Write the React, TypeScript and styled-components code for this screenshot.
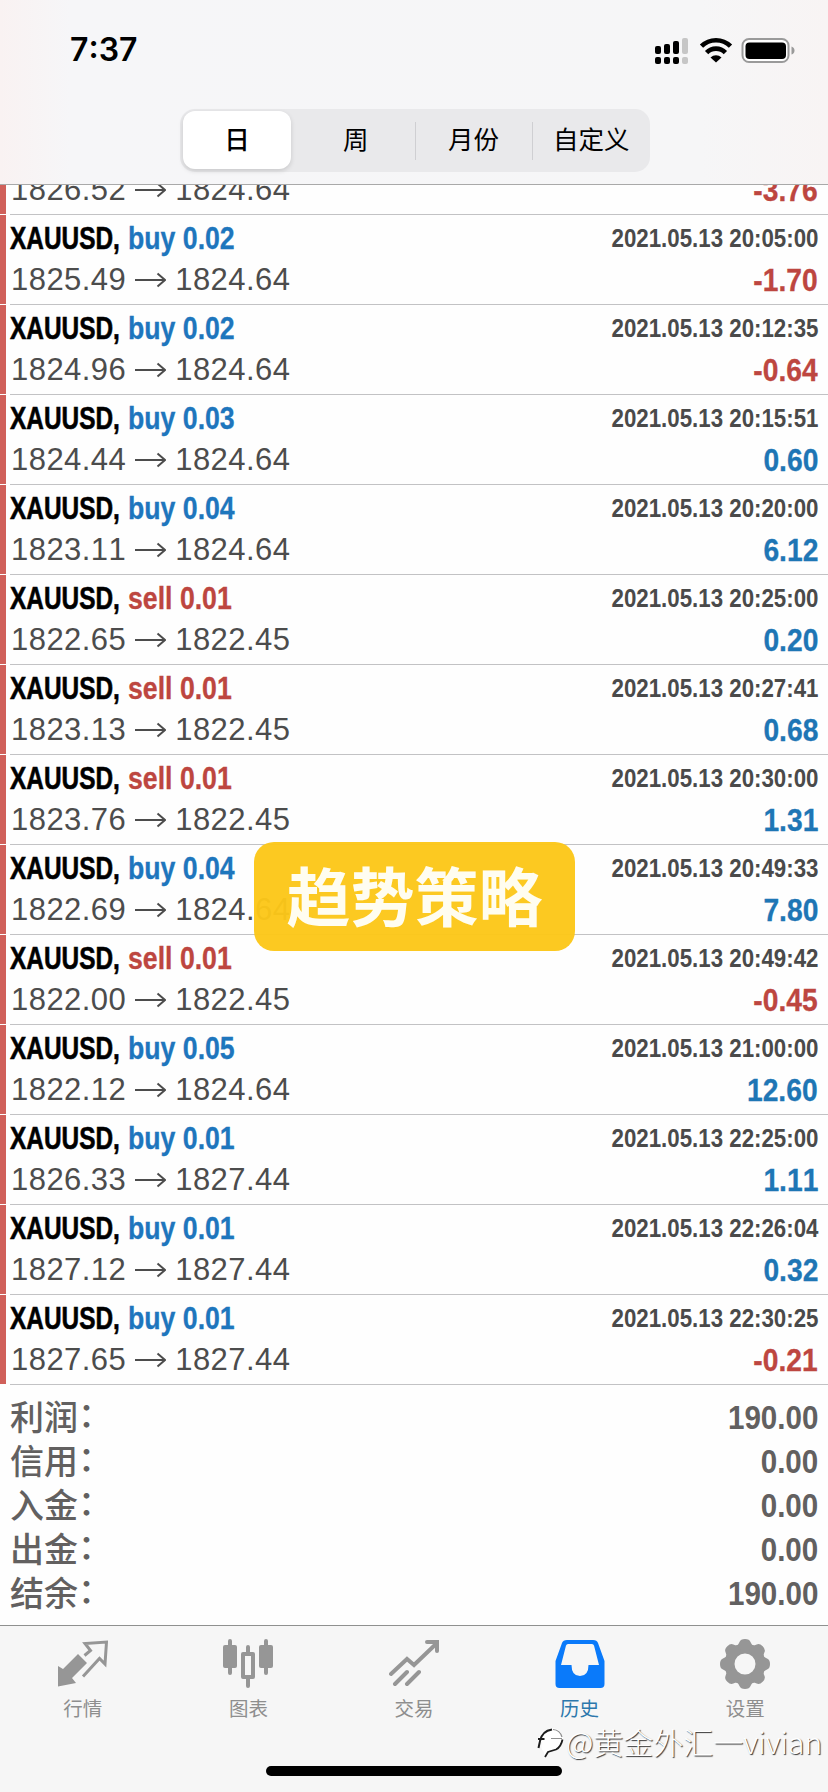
import React from "react";
import styled, { createGlobalStyle } from "styled-components";

const sans = `"Liberation Sans", Arial, sans-serif`;
const cjk = `"Noto Sans CJK SC", sans-serif`;

const GlobalStyle = createGlobalStyle`
  * { box-sizing: border-box; font-kerning: none !important; }
  html, body { margin: 0; padding: 0; background: #fefefe; }
  body { width: 828px; height: 1792px; overflow: hidden; font-family: ${sans}; }
`;

const Screen = styled.div`
  position: relative;
  display: flex;
  flex-direction: column;
  width: 828px;
  height: 1792px;
  overflow: hidden;
  background: #fefefe;
`;

const Header = styled.header`
  flex: none;
  height: 185px;
  border-bottom: 1px solid #a9a9a9;
  background: linear-gradient(90deg, #f9f2f2 0, #f6f6f8 70px, #f6f6f7 700px, #f8f4f4 100%);
`;

const StatusBar = styled.div`
  display: flex;
  align-items: center;
  justify-content: space-between;
  height: 109px;
  padding: 0 32px 10px 70px;
`;

const Time = styled.span`
  font: 600 32px/40px Inter, sans-serif;
  color: #000;
`;

const StatusIcons = styled.svg`
  display: block;
`;

const Segmented = styled.div`
  display: flex;
  width: 470px;
  height: 63px;
  margin-left: 180px;
  border-radius: 15px;
  background: #e9e9eb;
`;

const Segment = styled.div<{ $active?: boolean; $divided?: boolean }>`
  display: flex;
  justify-content: center;
  flex: ${(p) => (p.$active ? "0 0 108px" : "1 1 0")};
  margin: ${(p) => (p.$active ? "2px 6px 3px 3px" : "0")};
  padding-top: ${(p) => (p.$active ? "9px" : "11px")};
  border-radius: ${(p) => (p.$active ? "12px" : "0")};
  background: ${(p) =>
    p.$active
      ? "#fff"
      : p.$divided
        ? "linear-gradient(#cfcfd2, #cfcfd2) left center / 1px 38px no-repeat"
        : "none"};
  box-shadow: ${(p) => (p.$active ? "0 2px 5px rgba(0, 0, 0, 0.14)" : "none")};
  font: ${(p) => (p.$active ? 500 : 400)} 25.5px/36px ${cjk};
  color: #000;
`;

const DealList = styled.div`
  display: flex;
  flex-direction: column;
  justify-content: flex-end;
  flex: none;
  height: 1200px;
  overflow: hidden;
`;

const DealRow = styled.div`
  display: flex;
  flex: none;
  height: 90px;
`;

const Strip = styled.div`
  width: 6px;
  height: 89px;
  background: #d0605a;
`;

const DealBody = styled.div`
  display: flex;
  justify-content: space-between;
  flex: 1;
  margin-left: 4px;
  padding: 4px 10px 0 0;
  border-bottom: 1px solid #c2c2c4;
`;

const Column = styled.div<{ $end?: boolean }>`
  display: flex;
  flex-direction: column;
  align-items: ${(p) => (p.$end ? "flex-end" : "flex-start")};
`;

const Title = styled.div`
  display: flex;
  height: 41px;
  font: 700 31px/40px ${sans};
  white-space: pre;
`;

const SymbolName = styled.span`
  width: 118px;
  color: #000;
  transform: scaleX(0.787);
  transform-origin: left;
  -webkit-text-stroke: 0.6px currentColor;
`;

const Volume = styled.span<{ $sell: boolean }>`
  color: ${(p) => (p.$sell ? "#bd4640" : "#1e76bd")};
  transform: scaleX(0.86);
  transform-origin: left;
  -webkit-text-stroke: 0.3px currentColor;
`;

const Prices = styled.div`
  display: flex;
  align-items: center;
  gap: 9px;
  height: 40px;
  padding-left: 1px;
  font: 400 31px/40px ${sans};
  letter-spacing: 0.45px;
  color: #4c4c4c;
`;

const Moment = styled.div`
  height: 41px;
  font: 700 26px/38px ${sans};
  color: #4a4a4a;
  transform: scaleX(0.857);
  transform-origin: right;
`;

const Profit = styled.div<{ $loss: boolean }>`
  height: 40px;
  font: 700 31px/42px ${sans};
  color: ${(p) => (p.$loss ? "#bd4640" : "#1e76b5")};
  transform: scaleX(0.91);
  transform-origin: right;
  -webkit-text-stroke: 0.3px currentColor;
`;

const Summary = styled.section`
  flex: none;
  height: 240px;
  padding: 10px 10px 0 10px;
`;

const SummaryRow = styled.div`
  display: flex;
  justify-content: space-between;
  height: 44px;
  color: #626060;
`;

const SummaryLabel = styled.span`
  display: flex;
  margin-top: -1px;
  font: 500 34px/44px ${cjk};
`;

const Colon = styled.span`
  margin-top: -3px;
`;

const SummaryValue = styled.span`
  font: 700 32.5px/46px ${sans};
  transform: scaleX(0.91);
  transform-origin: right;
`;

const TabBar = styled.nav`
  display: flex;
  flex: none;
  height: 167px;
  padding-top: 13px;
  border-top: 1px solid #8f908f;
  background: #f6f6f6;
`;

const Tab = styled.div<{ $active?: boolean }>`
  display: flex;
  flex-direction: column;
  align-items: center;
  flex: 1;
  gap: 4px;
  color: ${(p) => (p.$active ? "#0a7afa" : "#969696")};
  font: 400 19.5px/29px ${cjk};
`;

const TabLabel = styled.span<{ $active?: boolean }>`
  color: ${(p) => (p.$active ? "#2d78ac" : "#8e8e8e")};
`;

const HomeIndicator = styled.div`
  position: absolute;
  left: 266px;
  top: 1766px;
  width: 296px;
  height: 10px;
  border-radius: 5px;
  background: #000;
`;

const Badge = styled.div`
  position: absolute;
  left: 254px;
  top: 842px;
  display: flex;
  justify-content: center;
  width: 321px;
  height: 109px;
  padding-top: 6px;
  border-radius: 20px;
  background: rgba(252, 199, 24, 0.96);
  color: #fffdf0;
  font: 700 64px/90px ${cjk};
`;

const Watermark = styled.div`
  position: absolute;
  left: 536px;
  top: 1721px;
  display: flex;
  align-items: center;
  height: 40px;
  color: #fff;
  font: 300 30px/40px ${cjk};
  text-shadow: 1px 1px 1px #333;
  white-space: nowrap;
`;

function Arrow() {
  return (
    <svg width="31" height="18" viewBox="0 0 31 18" fill="none" stroke="#4c4c4c" strokeWidth="2">
      <path d="M0 9H29.500M22.500 2.500L30 9L22.500 15.500" />
    </svg>
  );
}

function Status() {
  return (
    <StatusIcons width="142" height="32" viewBox="0 0 142 32">
      <g>
        <rect x="1" y="12" width="6" height="8" rx="2" />
        <rect x="10" y="10" width="6" height="10" rx="2" />
        <rect x="19" y="7" width="6" height="13" rx="2" />
        <rect x="28" y="4" width="6" height="16" rx="2" fill="#c6c6c6" />
        <rect x="1" y="23" width="6" height="7" rx="2" />
        <rect x="10" y="23" width="6" height="7" rx="2" />
        <rect x="19" y="23" width="6" height="7" rx="2" />
        <rect x="28" y="23" width="6" height="7" rx="2" fill="#c6c6c6" />
      </g>
      <g fill="none" stroke="#000" strokeWidth="4.6">
        <path d="M47.500 12.200A20.500 20.500 0 0 1 76.500 12.200" />
        <path d="M52.600 18.600A13 13 0 0 1 71.400 18.600" />
      </g>
      <path d="M56.500 23.500A8 8 0 0 1 67.500 23.500L62 28.500Z" />
      <rect x="88.500" y="5" width="46" height="23" rx="6.500" fill="#fff" stroke="#9a9a9a" strokeWidth="2" />
      <rect x="91.500" y="8.500" width="40.500" height="16.500" rx="4" />
      <path d="M137.500 12.500Q140.500 13.500 140.500 16.500T137.500 20.500Z" fill="#9a9a9a" />
    </StatusIcons>
  );
}

function QuotesIcon() {
  return (
    <svg width="50" height="50" viewBox="0 0 50 50">
      <path d="M0 27L5 30L20 15L29 24L14 39L18 44L0 47.500Z" fill="currentColor" />
      <path d="M26.500 16.500L32.500 11.500L27 4.500L48.500 3L47 25L41.500 19.500L25 37.500" fill="none" stroke="currentColor" strokeWidth="3" />
    </svg>
  );
}

function ChartIcon() {
  return (
    <svg width="50" height="50" viewBox="0 0 50 50" fill="none" stroke="currentColor">
      <path d="M7 2V34M43 2V34M25 8V14M25 40V47" strokeWidth="4" strokeLinecap="round" />
      <rect x="0" y="6" width="14" height="23" rx="2" fill="currentColor" stroke="none" />
      <rect x="36" y="6" width="14" height="23" rx="2" fill="currentColor" stroke="none" />
      <rect x="20" y="15" width="10" height="23" strokeWidth="4" strokeLinejoin="round" />
    </svg>
  );
}

function TradeIcon() {
  return (
    <svg width="50" height="50" viewBox="0 0 50 50" fill="none" stroke="currentColor" strokeWidth="4" strokeLinecap="round">
      <path d="M2 35L18 20L25 26L48 4M38 3H48V12M6 45L18 33M18 45L30 33" />
    </svg>
  );
}

function HistoryIcon() {
  return (
    <svg width="50" height="50" viewBox="0 0 50 50">
      <path
        fill="currentColor"
        fillRule="evenodd"
        d="M12 1H38Q42 1 43 4L49.500 22V45Q49.500 49 45.500 49H4.500Q0.500 49 0.500 45V22L7 4Q8 1 12 1ZM13 5Q11.500 5 11 6.500L6 26H16.500Q16.500 37 25 37T33.500 26H44L39 6.500Q38.500 5 37 5Z"
      />
    </svg>
  );
}

function SettingsIcon() {
  const teeth = [0, 45, 90, 135, 180, 225, 270, 315];
  return (
    <svg width="50" height="50" viewBox="0 0 50 50">
      <circle cx="25" cy="25" r="15.500" fill="none" stroke="currentColor" strokeWidth="10" />
      {teeth.map((a) => (
        <path key={a} d="M16 7.500Q18.500 6 19.500 3Q20.500 0 25 0T30.500 3Q31.500 6 34 7.500L27 13H23Z" fill="currentColor" transform={`rotate(${a} 25 25)`} />
      ))}
    </svg>
  );
}

function WatermarkLogo() {
  return (
    <svg width="30" height="36" viewBox="0 0 30 36" fill="none">
      <path d="M1 21Q3 8 15 5Q26 5 27 16Q26 26 15 29L8 34L8 29Q4 26 6 19Z" fill="#fff" />
      <path d="M2.500 25L4 18Q6 8 16 6.500M2 16H8.500" stroke="#1c1c1c" strokeWidth="2" />
      <path d="M15 15.500H26M17 6.500Q24 7 26 14" stroke="#8f8f8f" strokeWidth="1.200" />
      <path d="M26.500 16.500Q25 24 20 26.500L12 29L9 34" stroke="#1c1c1c" strokeWidth="1.800" />
    </svg>
  );
}

const deals: [string, string, string, string, string, string][] = [
  ["buy", "0.02", "1826.52", "1824.64", "2021.05.13 20:00:00", "-3.76"],
  ["buy", "0.02", "1825.49", "1824.64", "2021.05.13 20:05:00", "-1.70"],
  ["buy", "0.02", "1824.96", "1824.64", "2021.05.13 20:12:35", "-0.64"],
  ["buy", "0.03", "1824.44", "1824.64", "2021.05.13 20:15:51", "0.60"],
  ["buy", "0.04", "1823.11", "1824.64", "2021.05.13 20:20:00", "6.12"],
  ["sell", "0.01", "1822.65", "1822.45", "2021.05.13 20:25:00", "0.20"],
  ["sell", "0.01", "1823.13", "1822.45", "2021.05.13 20:27:41", "0.68"],
  ["sell", "0.01", "1823.76", "1822.45", "2021.05.13 20:30:00", "1.31"],
  ["buy", "0.04", "1822.69", "1824.64", "2021.05.13 20:49:33", "7.80"],
  ["sell", "0.01", "1822.00", "1822.45", "2021.05.13 20:49:42", "-0.45"],
  ["buy", "0.05", "1822.12", "1824.64", "2021.05.13 21:00:00", "12.60"],
  ["buy", "0.01", "1826.33", "1827.44", "2021.05.13 22:25:00", "1.11"],
  ["buy", "0.01", "1827.12", "1827.44", "2021.05.13 22:26:04", "0.32"],
  ["buy", "0.01", "1827.65", "1827.44", "2021.05.13 22:30:25", "-0.21"],
];

const totals = [
  ["利润", "190.00"],
  ["信用", "0.00"],
  ["入金", "0.00"],
  ["出金", "0.00"],
  ["结余", "190.00"],
];

const tabs = [
  { label: "行情", Icon: QuotesIcon },
  { label: "图表", Icon: ChartIcon },
  { label: "交易", Icon: TradeIcon },
  { label: "历史", Icon: HistoryIcon, active: true },
  { label: "设置", Icon: SettingsIcon },
];

export default function App() {
  return (
    <Screen>
      <GlobalStyle />
      <Header>
        <StatusBar>
          <Time>7:37</Time>
          <Status />
        </StatusBar>
        <Segmented>
          <Segment $active>日</Segment>
          <Segment>周</Segment>
          <Segment $divided>月份</Segment>
          <Segment $divided>自定义</Segment>
        </Segmented>
      </Header>
      <DealList>
        {deals.map(([side, volume, open, close, time, profit], index) => (
          <DealRow key={time}>
            <Strip />
            <DealBody>
              <Column>
                {/* The first row is scrolled under the header, so only its price line shows. */}
                <Title>
                  {index > 0 && (
                    <>
                      <SymbolName>XAUUSD,</SymbolName>
                      <Volume $sell={side === "sell"}>{`${side} ${volume}`}</Volume>
                    </>
                  )}
                </Title>
                <Prices>
                  <span>{open}</span>
                  <Arrow />
                  <span>{close}</span>
                </Prices>
              </Column>
              <Column $end>
                <Moment>{index > 0 && time}</Moment>
                <Profit $loss={profit.startsWith("-")}>{profit}</Profit>
              </Column>
            </DealBody>
          </DealRow>
        ))}
      </DealList>
      <Summary>
        {totals.map(([label, value]) => (
          <SummaryRow key={label}>
            <SummaryLabel>
              {label}
              <Colon>：</Colon>
            </SummaryLabel>
            <SummaryValue>{value}</SummaryValue>
          </SummaryRow>
        ))}
      </Summary>
      <TabBar>
        {tabs.map(({ label, Icon, active }) => (
          <Tab key={label} $active={active}>
            <Icon />
            <TabLabel $active={active}>{label}</TabLabel>
          </Tab>
        ))}
      </TabBar>
      <HomeIndicator />
      <Badge>趋势策略</Badge>
      <Watermark>
        <WatermarkLogo />
        <span>@黄金外汇一vivian</span>
      </Watermark>
    </Screen>
  );
}
